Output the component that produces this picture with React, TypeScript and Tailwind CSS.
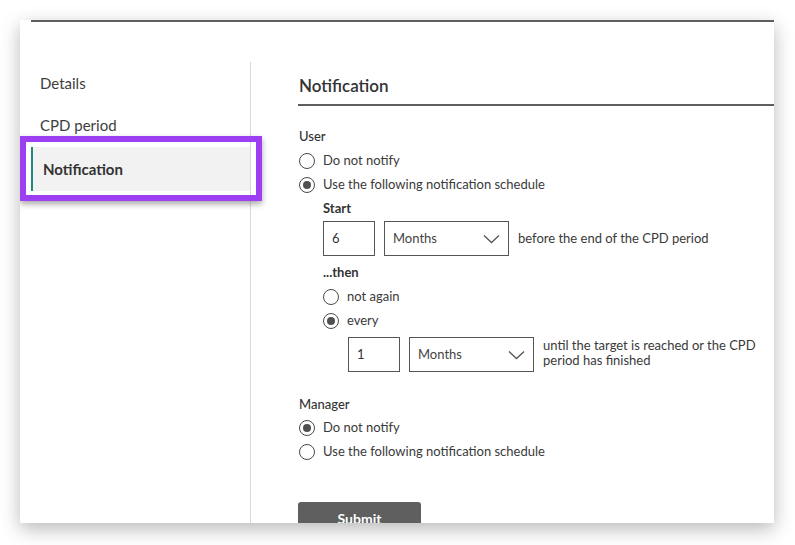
import React from 'react';

const FONT = { fontFamily: 'Lato, "Open Sans", sans-serif' };

function Radio({ checked, label }: { checked?: boolean; label: string }) {
  return (
    <div className="flex items-center h-[24px]">
      <span className="w-[16px] h-[16px] rounded-full border-[1.5px] border-[#4a4a4a] flex items-center justify-center bg-white">
        {checked && <span className="w-[8px] h-[8px] rounded-full bg-[#4f4f4f]" />}
      </span>
      <span className="ml-[8px] text-[13px] text-[#3a3a3a]">{label}</span>
    </div>
  );
}

function NumBox({ value }: { value: string }) {
  return (
    <div className="w-[52px] h-[35px] border border-[#555] flex items-center px-[8px] text-[13px] text-[#333]">
      {value}
    </div>
  );
}

function SelectBox() {
  return (
    <div className="w-[125px] h-[35px] border border-[#555] flex items-center justify-between pl-[8px] pr-[8px] text-[13px] text-[#444]">
      <span>Months</span>
      <svg width="17" height="10" viewBox="0 0 17 10" fill="none">
        <path d="M1 1.5 L8.5 8.5 L16 1.5" stroke="#555" strokeWidth="1.3" />
      </svg>
    </div>
  );
}

export default function App() {
  return (
    <div className="w-[795px] h-[545px] bg-white pt-[20px] pl-[20px] overflow-hidden" style={FONT}>
      <div className="relative w-[754px] h-[503px] bg-white shadow-[0_6px_18px_rgba(0,0,0,0.28)] pl-[11px] overflow-hidden">
        <div className="h-full border-t-2 border-[#5f5f5f] flex">
          {/* sidebar */}
          <div className="w-[220px] mt-[40px] border-r border-[#d8d8d8] text-[15px] text-[#3d3d3d]">
            <div className="h-[42px] flex items-center pl-[9px]">Details</div>
            <div className="h-[43px] flex items-center pl-[9px]">CPD period</div>
            <div className="h-[44px] flex items-center pl-[10px] bg-[#f2f2f2] border-l-2 border-[#1e8c7c] font-bold text-[#333]">
              Notification
            </div>
          </div>

          {/* content */}
          <div className="flex-1 mt-[40px] pl-[47px] text-[#333]">
            <div className="pt-[12px] pb-[6px] border-b-2 border-[#5f5f5f]">
              <h1 className="pl-[1px] text-[17px] leading-[24px] font-semibold text-[#333]">Notification</h1>
            </div>

            <div className="pl-[1px]">
              <div className="mt-[22px] text-[13px] leading-[16px] font-medium text-[#333]">User</div>
              <div className="mt-[5px]">
                <Radio label="Do not notify" />
                <Radio checked label="Use the following notification schedule" />
              </div>

              <div className="pl-[24px]">
                <div className="mt-[3px] text-[13px] leading-[16px] font-bold text-[#333]">Start</div>
                <div className="mt-[5px] flex items-center gap-[9px]">
                  <NumBox value="6" />
                  <SelectBox />
                  <span className="text-[13px] text-[#3a3a3a]">before the end of the CPD period</span>
                </div>

                <div className="mt-[8px] text-[13px] leading-[16px] font-bold text-[#333]">...then</div>
                <div className="mt-[5px]">
                  <Radio label="not again" />
                  <Radio checked label="every" />
                </div>

                <div className="pl-[25px] mt-[4px] flex items-center gap-[9px]">
                  <NumBox value="1" />
                  <SelectBox />
                  <span className="w-[225px] text-[13px] leading-[15px] text-[#3a3a3a] -mt-[4px]">
                    until the target is reached or the CPD period has finished
                  </span>
                </div>
              </div>

              <div className="mt-[24px] text-[13px] leading-[16px] font-medium text-[#333]">Manager</div>
              <div className="mt-[4px]">
                <Radio checked label="Do not notify" />
                <Radio label="Use the following notification schedule" />
              </div>
            </div>

            <button className="mt-[38px] w-[123px] h-[40px] rounded-t-[3px] bg-[#5f5f5f] text-white text-[14px] leading-[17px] font-bold flex items-start justify-center pt-[8px]">
              Submit
            </button>
          </div>
        </div>

        {/* highlight box */}
        <div className="absolute left-0 top-[116px] w-[242px] h-[65px] border-[6px] border-[#9c3ef2] shadow-[0_3px_6px_rgba(0,0,0,0.35)]" />
      </div>
    </div>
  );
}
